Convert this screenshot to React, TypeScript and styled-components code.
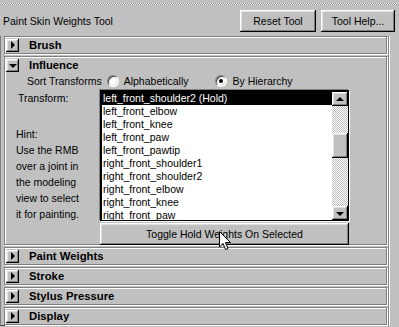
import React from "react";
import styled, { createGlobalStyle, css } from "styled-components";

const Global = createGlobalStyle`
  html, body { margin: 0; padding: 0; background: #c0c0c0; }
  body { width: 399px; height: 327px; overflow: hidden; font-family: "Liberation Sans", Arial, sans-serif; font-size: 10.5px; color: #000; }
`;

const raised = css`
  background: #c0c0c0;
  box-shadow: inset -1px -1px #000, inset 1px 1px #fff, inset -2px -2px #808080, inset 2px 2px #dfdfdf;
`;

const Window = styled.div`
  width: 399px;
  height: 327px;
  display: flex;
  flex-direction: column;
  box-sizing: border-box;
`;

const TearOff = styled.div`
  margin: 3px 2px 0 2px;
  height: 2px;
  background: repeating-conic-gradient(#808080 0 25%, #ffffff 0 50%) 0 0 / 2px 2px;
`;

const TopBar = styled.div`
  display: flex;
  align-items: center;
  height: 22px;
  margin-top: 5px;
  padding: 0 4px 0 3px;
`;

const Title = styled.div`
  flex: 1;
`;

const Button = styled.button<{ $w: number }>`
  ${raised};
  width: ${(p) => p.$w}px;
  height: 22px;
  border: none;
  padding: 0;
  margin-left: 5px;
  font: inherit;
  color: #000;
`;

const ScrollArea = styled.div`
  margin-top: 4px;
  width: 389px;
  height: 290px;
  box-sizing: border-box;
  border-left: 1px solid #808080;
  border-bottom: 1px solid #404040;
  border-right: 1px solid #808080;
  box-shadow: 1px 0 #fff;
  padding: 0 0 0 3px;
  display: flex;
  flex-direction: column;
  gap: 2px;
`;

const Frame = styled.div<{ $h: number }>`
  width: 383px;
  height: ${(p) => p.$h}px;
  box-sizing: border-box;
  border: 1px solid #808080;
  box-shadow: inset 1px 1px #fff, 1px 1px #fff;
  display: flex;
  flex-direction: column;
`;

const Header = styled.div`
  height: 16px;
  display: flex;
  align-items: center;
  flex-shrink: 0;
`;

const ArrowBox = styled.div`
  ${raised};
  width: 13px;
  height: 13px;
  margin-left: 1px;
  margin-right: 10px;
  display: flex;
  align-items: center;
  justify-content: center;
`;

const Tri = styled.div<{ $dir: "right" | "down" | "up" }>`
  width: 0;
  height: 0;
  ${(p) =>
    p.$dir === "right"
      ? css`border-top: 4px solid transparent; border-bottom: 4px solid transparent; border-left: 4px solid #000; margin-left: 1px;`
      : p.$dir === "down"
      ? css`border-left: 4px solid transparent; border-right: 4px solid transparent; border-top: 4px solid #000; margin-top: 1px;`
      : css`border-left: 4px solid transparent; border-right: 4px solid transparent; border-bottom: 4px solid #000;`}
`;

const HeaderLabel = styled.div`
  font-weight: bold;
  font-size: 11.3px;
`;

const Content = styled.div`
  display: flex;
  flex-direction: column;
`;

const SortRow = styled.div`
  height: 16px;
  display: flex;
  align-items: center;
  padding-left: 22px;
`;

const RadioItem = styled.label<{ $ml: number }>`
  display: flex;
  align-items: center;
  margin-left: ${(p) => p.$ml}px;
`;

const Radio = styled.span<{ $on?: boolean }>`
  position: relative;
  width: 12px;
  height: 12px;
  box-sizing: border-box;
  border-radius: 50%;
  background: #fff;
  border: 1px solid;
  border-color: #808080 #fff #fff #808080;
  box-shadow: inset 1px 1px #404040, inset -1px -1px #dfdfdf;
  margin-right: 5px;
  ${(p) =>
    p.$on &&
    css`
      &::after {
        content: "";
        position: absolute;
        left: 3px;
        top: 3px;
        width: 4px;
        height: 4px;
        border-radius: 50%;
        background: #000;
      }
    `}
`;

const Body = styled.div`
  display: grid;
  grid-template-columns: 95px 249px;
  margin-top: 1px;
`;

const LeftCol = styled.div`
  padding-left: 11px;
  display: flex;
  flex-direction: column;
`;

const Line = styled.div`
  line-height: 16px;
  height: 16px;
`;

const TransformLabel = styled(Line)`
  padding-left: 2px;
`;

const HintBlock = styled.div`
  margin-top: 20px;
`;

const RightCol = styled.div`
  display: flex;
  flex-direction: column;
`;

const ListBox = styled.div`
  height: 131px;
  box-sizing: border-box;
  border-top: 2px solid #000;
  border-left: 2px solid #000;
  border-right: 1px solid #000;
  border-bottom: 1px solid #000;
  box-shadow: -1px -1px #808080, 1px 1px #fff;
  background: #fff;
  display: flex;
  overflow: hidden;
`;

const Items = styled.div`
  flex: 1;
  overflow: hidden;
`;

const Item = styled.div<{ $sel?: boolean }>`
  height: 13px;
  line-height: 13px;
  padding-left: 1px;
  white-space: nowrap;
  background: ${(p) => (p.$sel ? "#000" : "transparent")};
  color: ${(p) => (p.$sel ? "#fff" : "#000")};
`;

const ScrollBar = styled.div`
  width: 16px;
  display: flex;
  flex-direction: column;
  background: repeating-conic-gradient(#ffffff 0 25%, #c0c0c0 0 50%) 0 0 / 2px 2px;
`;

const ScrollBtn = styled.div`
  ${raised};
  height: 14px;
  flex-shrink: 0;
  display: flex;
  align-items: center;
  justify-content: center;
`;

const Track = styled.div`
  flex: 1;
  display: flex;
  flex-direction: column;
`;

const Thumb = styled.div`
  ${raised};
  height: 25px;
  margin-top: 27px;
`;

const ToggleButton = styled.button`
  ${raised};
  margin-top: 2px;
  height: 22px;
  border: none;
  padding: 0;
  font: inherit;
  color: #000;
  width: 249px;
`;

const Cursor = styled.svg`
  position: absolute;
  left: 219px;
  top: 231px;
  pointer-events: none;
`;

const items = [
  "left_front_elbow",
  "left_front_knee",
  "left_front_paw",
  "left_front_pawtip",
  "right_front_shoulder1",
  "right_front_shoulder2",
  "right_front_elbow",
  "right_front_knee",
  "right_front_paw",
];

const Collapsed = ({ label }: { label: string }) => (
  <Frame $h={18}>
    <Header>
      <ArrowBox>
        <Tri $dir="right" />
      </ArrowBox>
      <HeaderLabel>{label}</HeaderLabel>
    </Header>
  </Frame>
);

export default function App() {
  return (
    <Window>
      <Global />
      <TearOff />
      <TopBar>
        <Title>Paint Skin Weights Tool</Title>
        <Button $w={76}>Reset Tool</Button>
        <Button $w={74}>Tool Help...</Button>
      </TopBar>
      <ScrollArea>
        <Collapsed label="Brush" />
        <Frame $h={189}>
          <Header>
            <ArrowBox>
              <Tri $dir="down" />
            </ArrowBox>
            <HeaderLabel>Influence</HeaderLabel>
          </Header>
          <Content>
            <SortRow>
              Sort Transforms
              <RadioItem $ml={5}>
                <Radio />
                Alphabetically
              </RadioItem>
              <RadioItem $ml={27}>
                <Radio $on />
                By Hierarchy
              </RadioItem>
            </SortRow>
            <Body>
              <LeftCol>
                <TransformLabel>Transform:</TransformLabel>
                <HintBlock>
                  <Line>Hint:</Line>
                  <Line>Use the RMB</Line>
                  <Line>over a joint in</Line>
                  <Line>the modeling</Line>
                  <Line>view to select</Line>
                  <Line>it for painting.</Line>
                </HintBlock>
              </LeftCol>
              <RightCol>
                <ListBox>
                  <Items>
                    <Item $sel>left_front_shoulder2 (Hold)</Item>
                    {items.map((t) => (
                      <Item key={t}>{t}</Item>
                    ))}
                  </Items>
                  <ScrollBar>
                    <ScrollBtn>
                      <Tri $dir="up" />
                    </ScrollBtn>
                    <Track>
                      <Thumb />
                    </Track>
                    <ScrollBtn>
                      <Tri $dir="down" />
                    </ScrollBtn>
                  </ScrollBar>
                </ListBox>
                <ToggleButton>Toggle Hold Weights On Selected</ToggleButton>
              </RightCol>
            </Body>
          </Content>
        </Frame>
        <Collapsed label="Paint Weights" />
        <Collapsed label="Stroke" />
        <Collapsed label="Stylus Pressure" />
        <Collapsed label="Display" />
      </ScrollArea>
      <Cursor width="13" height="20" viewBox="0 0 13 20">
        <path d="M0.5 0.5 L0.5 16 L4 12.5 L6.5 18.5 L9 17.5 L6.5 11.5 L11.5 11.5 Z" fill="#fff" stroke="#000" strokeWidth="1" />
      </Cursor>
    </Window>
  );
}
